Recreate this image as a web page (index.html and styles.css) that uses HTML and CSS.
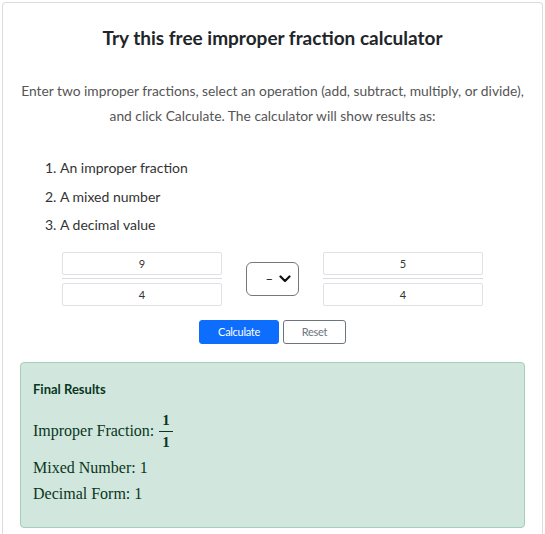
FILE: index.html
```html
<!DOCTYPE html>
<html>
<head>
<meta charset="utf-8">
<link rel="stylesheet" href="styles.css">
</head>
<body>
<div class="card">
  <h2 class="title">Try this free improper fraction calculator</h2>
  <p class="intro">Enter two improper fractions, select an operation (add, subtract, multiply, or divide), and click Calculate. The calculator will show results as:</p>
  <ol class="list">
    <li>An improper fraction</li>
    <li>A mixed number</li>
    <li>A decimal value</li>
  </ol>
  <div class="calc">
    <div class="frac">
      <input class="num" type="text" value="9">
      <div class="bar"></div>
      <input class="num" type="text" value="4">
    </div>
    <div class="op">
      <span class="op-sign">–</span>
      <svg class="chev" width="12" height="8" viewBox="0 0 12 8"><path d="M1.5 1.5 L6 6 L10.5 1.5" fill="none" stroke="#111" stroke-width="2.2" stroke-linecap="round" stroke-linejoin="round"/></svg>
    </div>
    <div class="frac">
      <input class="num" type="text" value="5">
      <div class="bar"></div>
      <input class="num" type="text" value="4">
    </div>
  </div>
  <div class="buttons">
    <button class="btn btn-primary">Calculate</button>
    <button class="btn btn-outline">Reset</button>
  </div>
  <div class="result">
    <div class="result-title">Final Results</div>
    <div class="math-line"><span>Improper Fraction:</span>
      <span class="mfrac"><span class="mnum">1</span><span class="mden">1</span></span>
    </div>
    <div class="math-line plain">Mixed Number: 1</div>
    <div class="math-line plain">Decimal Form: 1</div>
  </div>
</div>
</body>
</html>
```
FILE: styles.css
```css
html, body {
  margin: 0;
  padding: 0;
  background: #fff;
}
body {
  font-family: Lato, "Noto Sans", sans-serif;
  color: #212529;
}
.card {
  margin: 2px 2px 0 2px;
  border: 1px solid #dcdcdc;
  border-bottom: none;
  border-radius: 4px 4px 0 0;
  padding: 23px 17px 6px 17px;
  box-sizing: border-box;
}
.title {
  margin: 0;
  text-align: center;
  font-size: 19px;
  font-weight: 700;
  line-height: 24px;
  color: #212529;
}
.intro {
  margin: 28px -10px 0 -10px;
  text-align: center;
  font-size: 13.8px;
  line-height: 25px;
  color: #555;
}
.list {
  margin: 26px 0 0 0;
  padding-left: 40px;
  font-size: 14px;
  line-height: 28.5px;
  color: #333;
}
.calc {
  display: flex;
  justify-content: center;
  align-items: center;
  gap: 24px;
  margin-top: 12px;
}
.frac {
  display: flex;
  flex-direction: column;
  width: 160px;
}
.num {
  box-sizing: border-box;
  width: 160px;
  height: 23px;
  border: 1px solid #dee2e6;
  border-radius: 2px;
  text-align: center;
  font-family: Lato, sans-serif;
  font-size: 11px;
  color: #333;
  padding: 0;
  outline: none;
  background: #fff;
}
.bar {
  height: 1px;
  background: #dcdcdc;
  margin: 3px 0 4px 0;
}
.op {
  box-sizing: border-box;
  width: 53px;
  height: 34px;
  border: 1px solid #777;
  border-radius: 6px;
  display: flex;
  align-items: center;
  justify-content: flex-end;
  gap: 6px;
  padding-right: 7px;
}
.op-sign {
  font-size: 13px;
  color: #222;
}
.chev {
  display: block;
}
.buttons {
  display: flex;
  justify-content: center;
  gap: 4px;
  margin-top: 14px;
}
.btn {
  box-sizing: border-box;
  height: 24px;
  border-radius: 3px;
  font-family: Lato, sans-serif;
  font-size: 11px;
  letter-spacing: -0.3px;
  padding: 0;
}
.btn-primary {
  width: 80px;
  background: #0d6efd;
  border: 1px solid #0d6efd;
  color: #fff;
}
.btn-outline {
  width: 63px;
  background: #fff;
  border: 1px solid #6c757d;
  color: #6c757d;
}
.result {
  margin: 18px 0 0 0;
  background: #d1e7dd;
  border: 1px solid #a3cfbb;
  border-radius: 4px;
  padding: 17px 12px 20px 12px;
  color: #0a3622;
}
.result-title {
  font-size: 13px;
  font-weight: 700;
  line-height: 18px;
}
.math-line {
  display: flex;
  align-items: center;
  gap: 5px;
  font-family: "Liberation Serif", serif;
  font-size: 16px;
  color: #0a3622;
}
.result-title + .math-line {
  margin-top: 12px;
}
.plain {
  line-height: 26px;
}
.math-line + .plain {
  margin-top: 2px;
}
.plain + .plain {
  margin-top: 0;
}
.mfrac {
  display: inline-flex;
  flex-direction: column;
  align-items: center;
  font-size: 15px;
  font-weight: 700;
}
.mnum {
  border-bottom: 1px solid #0a3622;
  padding: 0 3px 1px 3px;
  line-height: 20px;
}
.mden {
  line-height: 21px;
}
```
